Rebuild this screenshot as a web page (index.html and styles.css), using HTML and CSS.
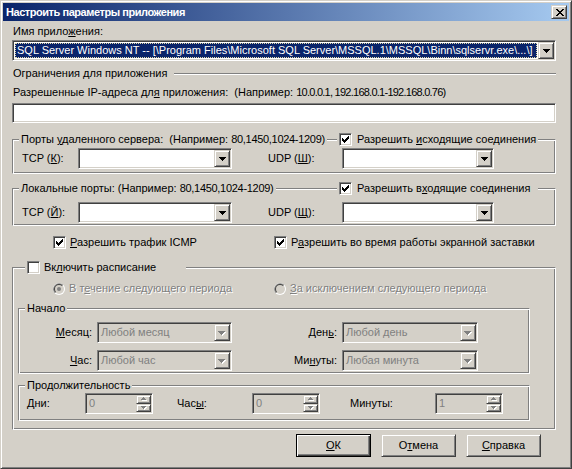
FILE: index.html
```html
<!DOCTYPE html>
<html lang="ru">
<head>
<meta charset="utf-8">
<title>Настроить параметры приложения</title>
<link rel="stylesheet" href="styles.css">
</head>
<body>
<div class="window">
  <div class="titlebar">
    <span class="title">Настроить параметры приложения</span>
    <span class="close raised"><svg width="8" height="7" viewBox="0 0 8 7" shape-rendering="crispEdges"><path fill="#000" d="M0 0h2v1H0zM6 0h2v1H6zM1 1h2v1H1zM5 1h2v1H5zM2 2h4v1H2zM3 3h2v1H3zM2 4h4v1H2zM1 5h2v1H1zM5 5h2v1H5zM0 6h2v1H0zM6 6h2v1H6z"/></svg></span>
  </div>

  <div class="content">
    <div class="label l-app">Имя прило<u>ж</u>ения:</div>
    <div class="combo sunken app">
      <div class="combo-sel">SQL Server Windows NT -- [\Program Files\Microsoft SQL Server\MSSQL.1\MSSQL\Binn\sqlservr.exe\...\]</div>
      <span class="arrow-btn raised"><svg width="7" height="4" viewBox="0 0 7 4" shape-rendering="crispEdges"><path fill="#000" d="M0 0h7v1H0zM1 1h5v1H1zM2 2h3v1H2zM3 3h1v1H3z"/></svg></span>
    </div>

    <div class="sep"><span class="sep-text">Ограничения для приложения</span><i class="etch"></i></div>

    <div class="label l-ip">Разрешенные IP-адреса дл<u>я</u> приложения:&nbsp; (Например: <span class="num">10.0.0.1, 192.168.0.1-192.168.0.76</span>)</div>
    <div class="field sunken"></div>

    <div class="group g-remote">
      <div class="legend split">
        <span class="lg lg-text">Порты <u>у</u>даленного сервера:&nbsp; (Например: <span class="num-s">80,1450,1024-1209</span>)</span>
        <span class="lg lg-chk"><span class="cb sunken"><svg width="7" height="7" viewBox="0 0 7 7" shape-rendering="crispEdges"><path fill="#000" d="M6 0h1v1H6zM5 1h2v1H5zM0 2h1v1H0zM4 2h3v1H4zM0 3h2v1H0zM3 3h3v1H3zM0 4h5v1H0zM1 5h3v1H1zM2 6h1v1H2z"/></svg></span><span>Разрешить <u>и</u>сходящие соединения</span></span>
      </div>
      <div class="ports">
        <span class="pl">TCP (<u>К</u>):</span>
        <div class="combo sunken c-tcp"><span class="combo-text"></span><span class="arrow-btn raised"><svg width="7" height="4" viewBox="0 0 7 4" shape-rendering="crispEdges"><path fill="#000" d="M0 0h7v1H0zM1 1h5v1H1zM2 2h3v1H2zM3 3h1v1H3z"/></svg></span></div>
        <span class="pl pl-udp">UDP (<u>Ш</u>):</span>
        <div class="combo sunken c-udp"><span class="combo-text"></span><span class="arrow-btn raised"><svg width="7" height="4" viewBox="0 0 7 4" shape-rendering="crispEdges"><path fill="#000" d="M0 0h7v1H0zM1 1h5v1H1zM2 2h3v1H2zM3 3h1v1H3z"/></svg></span></div>
      </div>
    </div>

    <div class="group g-local">
      <div class="legend split">
        <span class="lg lg-text">Локальные порты: (Например: <span class="num-s">80,1450,1024-1209</span>)</span>
        <span class="lg lg-chk"><span class="cb sunken"><svg width="7" height="7" viewBox="0 0 7 7" shape-rendering="crispEdges"><path fill="#000" d="M6 0h1v1H6zM5 1h2v1H5zM0 2h1v1H0zM4 2h3v1H4zM0 3h2v1H0zM3 3h3v1H3zM0 4h5v1H0zM1 5h3v1H1zM2 6h1v1H2z"/></svg></span><span>Разрешить в<u>х</u>одящие соединения</span></span>
      </div>
      <div class="ports">
        <span class="pl">TCP (<u>Й</u>):</span>
        <div class="combo sunken c-tcp"><span class="combo-text"></span><span class="arrow-btn raised"><svg width="7" height="4" viewBox="0 0 7 4" shape-rendering="crispEdges"><path fill="#000" d="M0 0h7v1H0zM1 1h5v1H1zM2 2h3v1H2zM3 3h1v1H3z"/></svg></span></div>
        <span class="pl pl-udp">UDP (<u>Щ</u>):</span>
        <div class="combo sunken c-udp"><span class="combo-text"></span><span class="arrow-btn raised"><svg width="7" height="4" viewBox="0 0 7 4" shape-rendering="crispEdges"><path fill="#000" d="M0 0h7v1H0zM1 1h5v1H1zM2 2h3v1H2zM3 3h1v1H3z"/></svg></span></div>
      </div>
    </div>

    <div class="checks">
      <span class="opt"><span class="cb sunken"><svg width="7" height="7" viewBox="0 0 7 7" shape-rendering="crispEdges"><path fill="#000" d="M6 0h1v1H6zM5 1h2v1H5zM0 2h1v1H0zM4 2h3v1H4zM0 3h2v1H0zM3 3h3v1H3zM0 4h5v1H0zM1 5h3v1H1zM2 6h1v1H2z"/></svg></span><span><u>Р</u>азрешить трафик ICMP</span></span>
      <span class="opt"><span class="cb sunken"><svg width="7" height="7" viewBox="0 0 7 7" shape-rendering="crispEdges"><path fill="#000" d="M6 0h1v1H6zM5 1h2v1H5zM0 2h1v1H0zM4 2h3v1H4zM0 3h2v1H0zM3 3h3v1H3zM0 4h5v1H0zM1 5h3v1H1zM2 6h1v1H2z"/></svg></span><span>Р<u>а</u>зрешить во время работы экранной заставки</span></span>
    </div>

    <div class="group g-sched">
      <div class="legend l-sched">
        <span class="lg lg-sched"><span class="cb sunken"></span><span>Вк<u>л</u>ючить расписание</span></span>
      </div>
      <div class="radios">
        <span class="opt dis"><svg class="radio" width="12" height="12" viewBox="0 0 12 12"><circle cx="6" cy="6" r="6" fill="#fff"/><path d="M1.76 10.24A6 6 0 0 1 10.24 1.76Z" fill="#808080"/><circle cx="6" cy="6" r="5" fill="#d4d0c8"/><path d="M2.46 9.54A5 5 0 0 1 9.54 2.46Z" fill="#404040"/><circle cx="6" cy="6" r="4" fill="#d4d0c8"/><circle cx="6" cy="6" r="2" fill="#808080"/></svg><span>В т<u>е</u>чение следующего периода</span></span>
        <span class="opt dis"><svg class="radio" width="12" height="12" viewBox="0 0 12 12"><circle cx="6" cy="6" r="6" fill="#fff"/><path d="M1.76 10.24A6 6 0 0 1 10.24 1.76Z" fill="#808080"/><circle cx="6" cy="6" r="5" fill="#d4d0c8"/><path d="M2.46 9.54A5 5 0 0 1 9.54 2.46Z" fill="#404040"/><circle cx="6" cy="6" r="4" fill="#d4d0c8"/></svg><span><u>З</u>а исключением следующего периода</span></span>
      </div>

      <div class="group g-start">
        <div class="legend l-inner"><span class="lg lg-text">Начало</span></div>
        <div class="start-grid">
          <span class="sl"><u>М</u>есяц:</span>
          <div class="combo sunken off"><span class="combo-text">Любой месяц</span><span class="arrow-btn raised"><svg width="8" height="5" viewBox="0 0 8 5" shape-rendering="crispEdges"><path fill="#fff" d="M1 1h7v1H1zM2 2h5v1H2zM3 3h3v1H3zM4 4h1v1H4z"/><path fill="#808080" d="M0 0h7v1H0zM1 1h5v1H1zM2 2h3v1H2zM3 3h1v1H3z"/></svg></span></div>
          <span class="sl">Ден<u>ь</u>:</span>
          <div class="combo sunken off"><span class="combo-text">Любой день</span><span class="arrow-btn raised"><svg width="8" height="5" viewBox="0 0 8 5" shape-rendering="crispEdges"><path fill="#fff" d="M1 1h7v1H1zM2 2h5v1H2zM3 3h3v1H3zM4 4h1v1H4z"/><path fill="#808080" d="M0 0h7v1H0zM1 1h5v1H1zM2 2h3v1H2zM3 3h1v1H3z"/></svg></span></div>
          <span class="sl"><u>Ч</u>ас:</span>
          <div class="combo sunken off"><span class="combo-text">Любой час</span><span class="arrow-btn raised"><svg width="8" height="5" viewBox="0 0 8 5" shape-rendering="crispEdges"><path fill="#fff" d="M1 1h7v1H1zM2 2h5v1H2zM3 3h3v1H3zM4 4h1v1H4z"/><path fill="#808080" d="M0 0h7v1H0zM1 1h5v1H1zM2 2h3v1H2zM3 3h1v1H3z"/></svg></span></div>
          <span class="sl">Ми<u>н</u>уты:</span>
          <div class="combo sunken off"><span class="combo-text">Любая минута</span><span class="arrow-btn raised"><svg width="8" height="5" viewBox="0 0 8 5" shape-rendering="crispEdges"><path fill="#fff" d="M1 1h7v1H1zM2 2h5v1H2zM3 3h3v1H3zM4 4h1v1H4z"/><path fill="#808080" d="M0 0h7v1H0zM1 1h5v1H1zM2 2h3v1H2zM3 3h1v1H3z"/></svg></span></div>
        </div>
      </div>

      <div class="group g-dur">
        <div class="legend l-inner"><span class="lg lg-text">Продолжительность</span></div>
        <div class="dur-row">
          <span class="dl d1"><u>Д</u>ни:</span>
          <div class="spin sunken"><span class="spin-val">0</span><span class="spin-btns"><span class="spin-btn raised"><svg width="6" height="4" viewBox="0 0 6 4" shape-rendering="crispEdges"><path fill="#fff" d="M3 1h1v1H3zM2 2h3v1H2zM1 3h5v1H1z"/><path fill="#808080" d="M2 0h1v1H2zM1 1h3v1H1zM0 2h5v1H0z"/></svg></span><span class="spin-btn raised"><svg width="6" height="4" viewBox="0 0 6 4" shape-rendering="crispEdges"><path fill="#fff" d="M1 1h5v1H1zM2 2h3v1H2zM3 3h1v1H3z"/><path fill="#808080" d="M0 0h5v1H0zM1 1h3v1H1zM2 2h1v1H2z"/></svg></span></span></div>
          <span class="dl d2">Час<u>ы</u>:</span>
          <div class="spin sunken"><span class="spin-val">0</span><span class="spin-btns"><span class="spin-btn raised"><svg width="6" height="4" viewBox="0 0 6 4" shape-rendering="crispEdges"><path fill="#fff" d="M3 1h1v1H3zM2 2h3v1H2zM1 3h5v1H1z"/><path fill="#808080" d="M2 0h1v1H2zM1 1h3v1H1zM0 2h5v1H0z"/></svg></span><span class="spin-btn raised"><svg width="6" height="4" viewBox="0 0 6 4" shape-rendering="crispEdges"><path fill="#fff" d="M1 1h5v1H1zM2 2h3v1H2zM3 3h1v1H3z"/><path fill="#808080" d="M0 0h5v1H0zM1 1h3v1H1zM2 2h1v1H2z"/></svg></span></span></div>
          <span class="dl d3">Минуты:</span>
          <div class="spin sunken"><span class="spin-val">1</span><span class="spin-btns"><span class="spin-btn raised"><svg width="6" height="4" viewBox="0 0 6 4" shape-rendering="crispEdges"><path fill="#fff" d="M3 1h1v1H3zM2 2h3v1H2zM1 3h5v1H1z"/><path fill="#808080" d="M2 0h1v1H2zM1 1h3v1H1zM0 2h5v1H0z"/></svg></span><span class="spin-btn raised"><svg width="6" height="4" viewBox="0 0 6 4" shape-rendering="crispEdges"><path fill="#fff" d="M1 1h5v1H1zM2 2h3v1H2zM3 3h1v1H3z"/><path fill="#808080" d="M0 0h5v1H0zM1 1h3v1H1zM2 2h1v1H2z"/></svg></span></span></div>
        </div>
      </div>
    </div>

    <div class="buttons">
      <span class="btn default"><span><u>О</u>К</span></span>
      <span class="btn raised"><span>О<u>т</u>мена</span></span>
      <span class="btn raised"><span><u>С</u>правка</span></span>
    </div>
  </div>
</div>
</body>
</html>
```

FILE: styles.css
```css
* { box-sizing: border-box; }
html, body { margin: 0; padding: 0; }
body {
  width: 572px; height: 469px; overflow: hidden;
  background: #d4d0c8;
  font-family: "Liberation Sans", Arial, sans-serif;
  font-size: 11px; line-height: 13px; color: #000;
}
u { text-decoration: underline; text-underline-offset: 1px; }
svg { display: block; flex: none; }

/* 3D edges */
.raised {
  border: 1px solid; border-color: #d4d0c8 #404040 #404040 #d4d0c8;
  box-shadow: inset 1px 1px #fff, inset -1px -1px #808080;
  background: #d4d0c8;
}
.sunken {
  border: 1px solid; border-color: #808080 #fff #fff #808080;
  box-shadow: inset 1px 1px #404040, inset -1px -1px #d4d0c8;
}

/* window frame */
.window {
  width: 572px; height: 469px;
  display: flex; flex-direction: column;
  background: #d4d0c8;
  border: 1px solid; border-color: #d4d0c8 #404040 #404040 #d4d0c8;
  box-shadow: inset 1px 1px #fff, inset -1px -1px #808080;
  padding: 2px;
}
.titlebar {
  height: 18px; flex: none;
  display: flex; align-items: center;
  background: linear-gradient(to right, #0a246a, #a6caf0);
  color: #fff; font-weight: bold;
  padding-left: 3px;
}
.title { flex: 1; white-space: nowrap; letter-spacing: -0.45px; }
.close {
  width: 16px; height: 14px; margin-right: 2px;
  display: flex; align-items: center; justify-content: center;
  padding-left: 1px;
}

.content {
  flex: 1;
  display: flex; flex-direction: column;
  padding: 4px 13px 0 9px;
}
.label { white-space: nowrap; }
.l-app { padding-left: 1px; }
.l-ip { margin-top: 6px; padding-left: 1px; }
.num { letter-spacing: -0.75px; }
.num-s { letter-spacing: -0.3px; }

/* combo boxes */
.combo {
  display: flex; height: 21px; padding: 1px;
  background: #fff;
}
.combo.app { margin-top: 2px; }
.combo-sel {
  flex: 1; margin: 1px;
  background: #0a246a; color: #fff;
  line-height: 15px; padding-left: 2px;
  white-space: nowrap; overflow: hidden;
  outline: 1px dotted #e0d8a8; outline-offset: -1px;
}
.combo-text { flex: 1; line-height: 17px; padding-left: 2px; white-space: nowrap; overflow: hidden; }
.arrow-btn {
  width: 16px; height: 17px;
  display: flex; align-items: center; justify-content: center;
  padding-top: 1px;
}
.combo.off { background: #d4d0c8; }
.combo.off .combo-text { color: #808080; }

/* separator */
.sep { display: flex; align-items: center; margin-top: 6px; height: 13px; }
.sep-text { width: 162px; padding-left: 1px; white-space: nowrap; }
.etch { flex: 1; height: 2px; border-top: 1px solid #808080; border-bottom: 1px solid #fff; }

.field { height: 20px; margin-top: 4px; background: #fff; }

/* group boxes */
.group {
  border: 1px solid; border-color: #808080 #fff #fff #808080;
  box-shadow: inset 1px 1px #fff, inset -1px -1px #808080;
}
.legend { height: 13px; margin-top: -7px; display: flex; }
.legend.split { display: grid; grid-template-columns: 318px auto; justify-content: start; margin-left: 6px; }
.lg {
  background: #d4d0c8; padding: 0 2px;
  white-space: nowrap; justify-self: start;
}
.lg-text { display: block; }
.lg-chk, .lg-sched { display: flex; align-items: center; }
.lg-chk { width: 201px; }
.lg-chk .cb { margin-right: 5px; }

.cb {
  width: 13px; height: 13px; flex: none;
  background: #fff;
  display: flex; align-items: center; justify-content: center;
  margin-right: 4px;
}

.g-remote { margin-top: 16px; padding-bottom: 4px; }
.g-remote .ports { margin-top: 2px; }
.g-local { margin-top: 14px; padding-bottom: 2px; }
.g-local .ports { margin-top: 7px; }

.ports { display: flex; align-items: center; padding-left: 9px; }
.pl { width: 56px; white-space: nowrap; }
.pl-udp { margin-left: 36px; width: 74px; }
.c-tcp { width: 154px; }
.c-udp { width: 152px; }

/* check rows */
.checks {
  display: grid; grid-template-columns: 221px auto;
  padding-left: 41px; margin-top: 10px; height: 13px;
}
.opt { display: flex; align-items: center; white-space: nowrap; }
.opt.dis { color: #808080; text-shadow: 1px 1px #fff; }
.radio { margin-right: 4px; }

/* schedule */
.g-sched { margin-top: 18px; padding-bottom: 8px; }
.l-sched { margin-left: 12px; }
.lg-sched { width: 161px; }
.radios {
  display: grid; grid-template-columns: 221px auto;
  padding-left: 40px; margin-top: 8px; height: 13px;
}

.g-start { margin: 13px 25px 0 5px; padding-bottom: 2px; }
.g-dur { margin: 11px 25px 0 5px; padding-bottom: 6px; }
.l-inner { margin-left: 6px; }

.start-grid {
  display: grid;
  grid-template-columns: 78px 135px 110px 136px;
  row-gap: 7px; margin-top: 7px;
  align-items: center;
}
.sl { text-align: right; padding-right: 5px; white-space: nowrap; }

.dur-row { display: flex; align-items: center; margin-top: 1px; padding-left: 8px; }
.dl { white-space: nowrap; }
.d1 { width: 58px; }
.d2 { width: 99px; padding-left: 24px; }
.d3 { width: 115px; padding-left: 30px; }

.spin {
  display: flex; width: 68px; height: 21px; padding: 1px;
  background: #d4d0c8;
}
.spin-val { flex: 1; color: #808080; line-height: 17px; padding-left: 2px; }
.spin-btns { width: 15px; display: flex; flex-direction: column; }
.spin-btn { flex: 1; display: flex; align-items: center; justify-content: center; }

/* buttons */
.buttons {
  display: flex; justify-content: flex-end; gap: 10px;
  margin-top: 4px; padding-right: 15px;
}
.btn {
  width: 75px; height: 23px;
  display: flex; align-items: center; justify-content: center;
}
.btn.default {
  border: 1px solid #000;
  background: #d4d0c8;
  box-shadow: inset 1px 1px #fff, inset -1px -1px #404040, inset -2px -2px #808080;
}
```
